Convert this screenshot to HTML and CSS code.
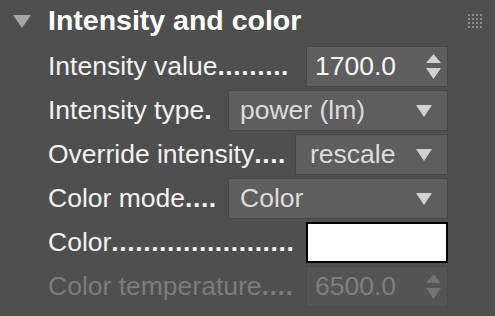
FILE: index.html
```html
<!DOCTYPE html>
<html lang="en">
<head>
  <meta charset="UTF-8">
  <title>Intensity and color</title>
  <link rel="stylesheet" href="styles.css">
</head>
<body>
  <div class="panel">
    <div class="header">
      <svg class="fold" width="18" height="13" viewBox="0 0 18 13"><polygon points="0,0 18,0 9,13" fill="#a6a6a6"/></svg>
      <h1>Intensity and color</h1>
      <svg class="grip" width="14" height="14" viewBox="0 0 14 14" fill="#8c8c8c">
        <rect x="0" y="0" width="2" height="2"/><rect x="4" y="0" width="2" height="2"/><rect x="8" y="0" width="2" height="2"/><rect x="12" y="0" width="2" height="2"/>
        <rect x="0" y="4" width="2" height="2"/><rect x="4" y="4" width="2" height="2"/><rect x="8" y="4" width="2" height="2"/><rect x="12" y="4" width="2" height="2"/>
        <rect x="0" y="8" width="2" height="2"/><rect x="4" y="8" width="2" height="2"/><rect x="8" y="8" width="2" height="2"/><rect x="12" y="8" width="2" height="2"/>
        <rect x="0" y="12" width="2" height="2"/><rect x="4" y="12" width="2" height="2"/><rect x="8" y="12" width="2" height="2"/><rect x="12" y="12" width="2" height="2"/>
      </svg>
    </div>

    <div class="rows">
      <div class="row">
        <span class="label">Intensity value<span class="dots">.........</span></span>
        <div class="field num">
          <span>1700.0</span>
          <svg class="spin" width="15" height="25" viewBox="0 0 15 25"><polygon points="7.5,0 15,9 0,9"/><polygon points="0,14 15,14 7.5,25"/></svg>
        </div>
      </div>
      <div class="row">
        <span class="label">Intensity type<span class="dots">.</span></span>
        <div class="field combo wide">
          <span>power (lm)</span>
          <svg class="drop" width="16" height="12" viewBox="0 0 16 12"><polygon points="0,0 16,0 8,12"/></svg>
        </div>
      </div>
      <div class="row">
        <span class="label">Override intensity<span class="dots">....</span></span>
        <div class="field combo">
          <span>rescale</span>
          <svg class="drop" width="16" height="12" viewBox="0 0 16 12"><polygon points="0,0 16,0 8,12"/></svg>
        </div>
      </div>
      <div class="row">
        <span class="label">Color mode<span class="dots">....</span></span>
        <div class="field combo wide">
          <span>Color</span>
          <svg class="drop" width="16" height="12" viewBox="0 0 16 12"><polygon points="0,0 16,0 8,12"/></svg>
        </div>
      </div>
      <div class="row">
        <span class="label">Color<span class="dots">.......................</span></span>
        <div class="swatch"></div>
      </div>
      <div class="row disabled">
        <span class="label">Color temperature<span class="dots">....</span></span>
        <div class="field num">
          <span>6500.0</span>
          <svg class="spin" width="15" height="25" viewBox="0 0 15 25"><polygon points="7.5,0 15,9 0,9"/><polygon points="0,14 15,14 7.5,25"/></svg>
        </div>
      </div>
    </div>
  </div>
</body>
</html>
```

FILE: styles.css
```css
body {
  margin: 0;
  background-color: #4f4f4f;
  font-family: "Liberation Sans", Arial, sans-serif;
  color: #f2f2f2;
}

.panel {
  width: 495px;
  height: 316px;
  overflow: hidden;
}

.header {
  display: flex;
  align-items: center;
  height: 42px;
}

.fold {
  margin-left: 13px;
  margin-top: 1px;
}

h1 {
  margin: -1px 0 0 17px;
  font-size: 28.5px;
  font-weight: bold;
  color: #ffffff;
  line-height: 1;
}

.grip {
  margin-left: auto;
  margin-right: 13px;
  margin-top: -1px;
}

.rows {
  display: flex;
  flex-direction: column;
  gap: 3px;
  margin: 4px 0 0 48px;
  width: 400px;
}

.row {
  display: flex;
  align-items: center;
  justify-content: space-between;
  height: 41px;
}

.label {
  font-size: 26.5px;
  white-space: nowrap;
  overflow: hidden;
}

.dots {
  font-weight: bold;
  letter-spacing: 0.6px;
}

.field {
  box-sizing: border-box;
  height: 41px;
  display: flex;
  align-items: center;
  justify-content: space-between;
  background-color: #5e5e5e;
  border: 1px solid #474747;
  font-size: 26.5px;
  color: #dcdcdc;
}

.num {
  width: 142px;
  padding: 0 6px 0 8px;
  color: #f6f6f6;
}

.combo {
  width: 153px;
  padding: 0 15px 0 14px;
}

.combo.wide {
  width: 220px;
  padding-left: 11px;
}

.spin, .drop {
  fill: #d2d2d2;
}

.swatch {
  box-sizing: border-box;
  width: 142px;
  height: 41px;
  background-color: #ffffff;
  border: 2px solid #000000;
}

.disabled .label {
  color: #7c7c7c;
}

.disabled .field {
  background-color: #545454;
  border-color: #4a4a4a;
  color: #7e7e7e;
}

.disabled .spin {
  fill: #737373;
}
```
